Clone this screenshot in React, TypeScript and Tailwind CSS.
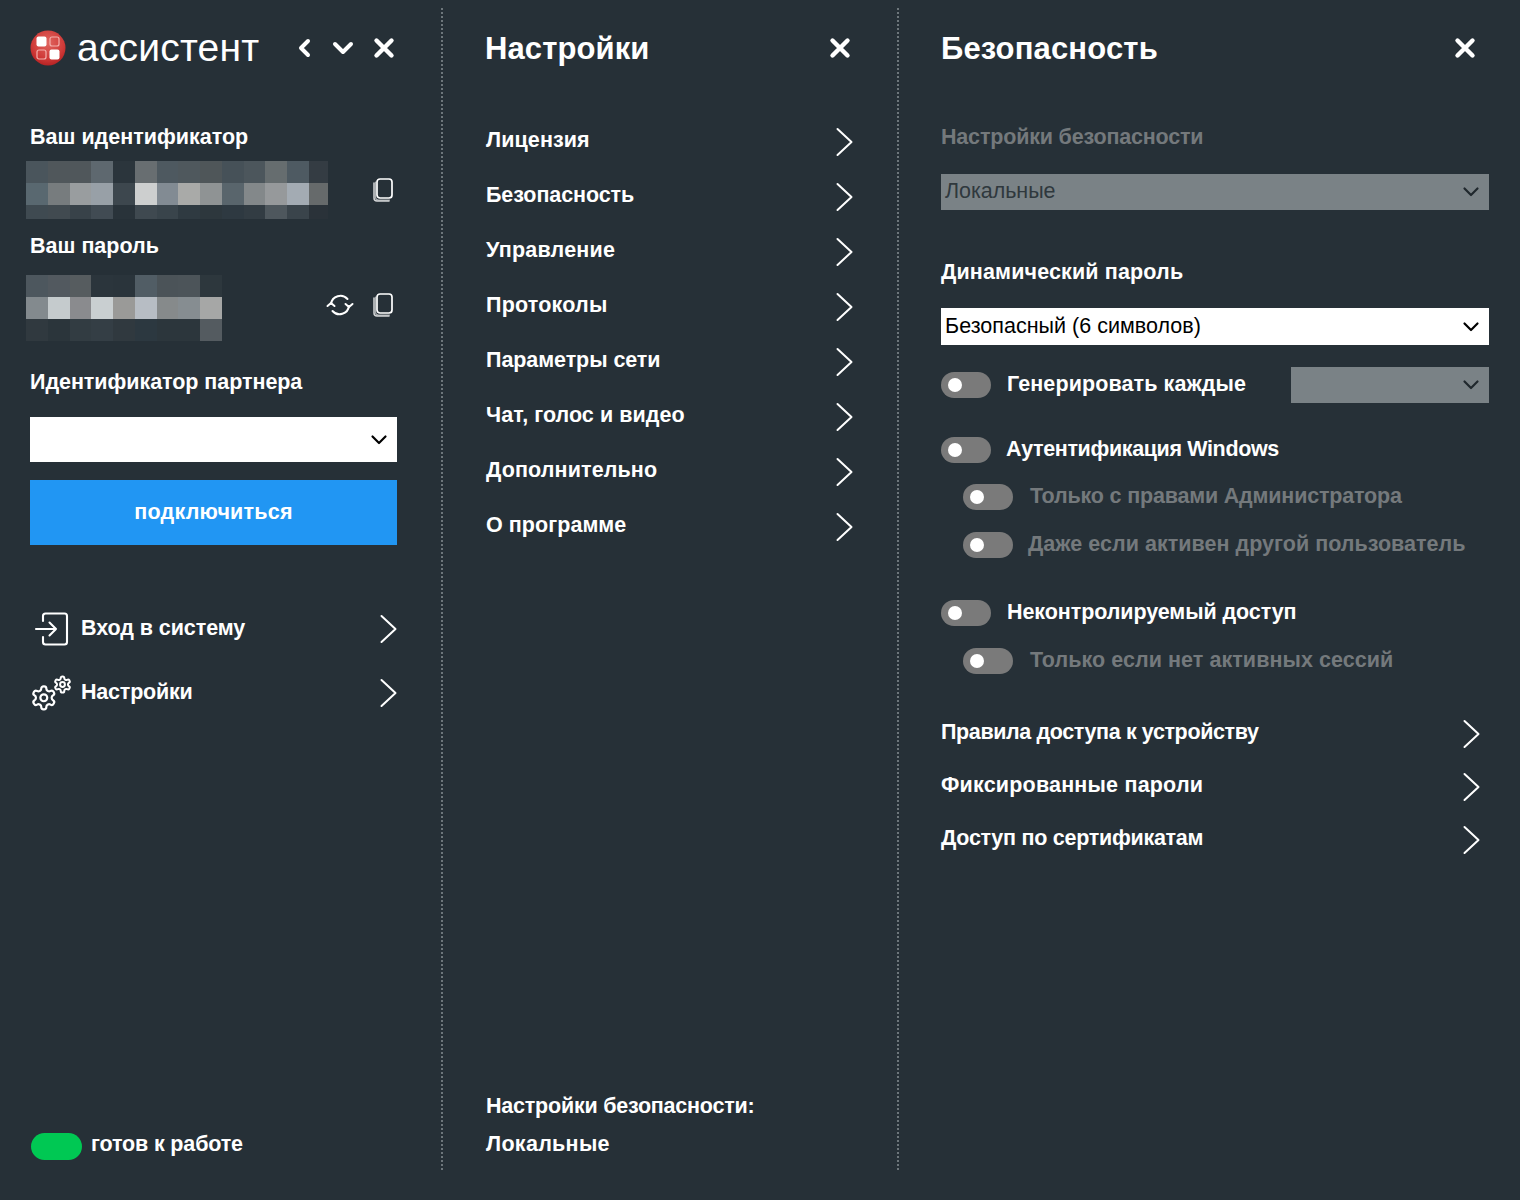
import React from "react";

const GEAR = "M12.22 2h-.44a2 2 0 0 0-2 2v.18a2 2 0 0 1-1 1.73l-.43.25a2 2 0 0 1-2 0l-.15-.08a2 2 0 0 0-2.73.73l-.22.38a2 2 0 0 0 .73 2.73l.15.1a2 2 0 0 1 1 1.72v.51a2 2 0 0 1-1 1.74l-.15.09a2 2 0 0 0-.73 2.73l.22.38a2 2 0 0 0 2.73.73l.15-.08a2 2 0 0 1 2 0l.43.25a2 2 0 0 1 1 1.73V20a2 2 0 0 0 2 2h.44a2 2 0 0 0 2-2v-.18a2 2 0 0 1 1-1.73l.43-.25a2 2 0 0 1 2 0l.15.08a2 2 0 0 0 2.73-.73l.22-.39a2 2 0 0 0-.73-2.73l-.15-.08a2 2 0 0 1-1-1.74v-.5a2 2 0 0 1 1-1.74l.15-.09a2 2 0 0 0 .73-2.73l-.22-.38a2 2 0 0 0-2.73-.73l-.15.08a2 2 0 0 1-2 0l-.43-.25a2 2 0 0 1-1-1.73V4a2 2 0 0 0-2-2z";

const ID_ROWS = [
  ["#4a555c","#50575b","#50575b","#5e686f","#2b353c","#686e71","#4e5960","#4f585d","#4f5659","#465158","#4c565c","#666d6f","#4e5a62","#343c43"],
  ["#596870","#777c7e","#999d9f","#98a0a7","#3d474e","#cdcfcf","#828b93","#a9aaa8","#8f9394","#59656c","#83888a","#96999b","#a3abb3","#666a6b"],
  ["#3f4a51","#414a50","#384249","#414b53","#29333a","#3f4950","#39444b","#2f3a41","#2d373d","#2e3941","#323c43","#4e575d","#3a444b","#2a3239"],
];
const PW_ROWS = [
  ["#4d575e","#52595f","#565c5f","#2b353c","#2a343b","#515d65","#4b5358","#4c5459","#2d373d"],
  ["#838a8e","#c5cbcd","#8a8b8e","#c9cfd1","#9a9a98","#b7bdc4","#868a8b","#868d91","#a6a7a6"],
  ["#30393f","#2b353b","#323c42","#343e45","#30393f","#2c3840","#2c363c","#2c363c","#545b60"],
];

function Mosaic({ rows, heights, lastCls }: { rows: string[][]; heights: string[]; lastCls: string }) {
  return (
    <div className="-ml-1 flex w-fit flex-col">
      {rows.map((r, i) => (
        <div key={i} className={`flex ${heights[i]}`}>
          {r.map((c, j) => (
            <div key={j} className={j === r.length - 1 ? lastCls : "w-[21.75px]"} style={{ backgroundColor: c }} />
          ))}
        </div>
      ))}
    </div>
  );
}

const Chevron = ({ className = "mt-[2px]" }: { className?: string }) => (
  <svg width="18" height="30" viewBox="0 0 18 30" fill="none" stroke="#fff" strokeWidth="2" strokeLinecap="round" strokeLinejoin="round" className={className}>
    <path d="M2.5 2l14 13-14 13" />
  </svg>
);

const Close = () => (
  <svg width="22" height="22" viewBox="0 0 22 22" fill="none" stroke="#fff" strokeWidth="4.4" strokeLinecap="round">
    <path d="M3.5 3.5l15 15M18.5 3.5l-15 15" />
  </svg>
);

const Copy = () => (
  <svg width="22" height="26" viewBox="0 0 22 26" fill="none" stroke="#fff" strokeLinecap="round">
    <rect x="5" y="2" width="15" height="19" rx="3" strokeWidth="1.7" />
    <path d="M2 6v15a3 3 0 0 0 3 3h12" strokeWidth="1.5" opacity=".8" />
    <path d="M3.5 5v15a3 3 0 0 0 3 3h11" strokeWidth="1.2" opacity=".6" />
  </svg>
);

const Refresh = () => (
  <svg width="28" height="26" viewBox="0 0 28 26" fill="none" stroke="#fff" strokeWidth="2" strokeLinecap="round" strokeLinejoin="round">
    <path d="M5 12A9.5 9.5 0 0 1 21.5 7" />
    <path d="M23 14A9.5 9.5 0 0 1 6.5 19" />
    <path d="M1.5 14l3.5-3 3.5 3M19.5 12l3.5 3 3.5-3" />
  </svg>
);

const Logo = () => (
  <svg width="36" height="36" viewBox="0 0 36 36">
    <defs>
      <radialGradient id="lg" cx="50%" cy="35%" r="70%">
        <stop offset="0%" stopColor="#e0655f" />
        <stop offset="65%" stopColor="#cf3a38" />
        <stop offset="100%" stopColor="#b01d1f" />
      </radialGradient>
    </defs>
    <circle cx="18" cy="18" r="17.5" fill="url(#lg)" />
    <rect x="6.5" y="6.5" width="10" height="10" rx="2" fill="#fff" />
    <rect x="20" y="7" width="9" height="9" rx="2" fill="none" stroke="#f3b0ac" strokeWidth="1.2" />
    <rect x="7" y="20" width="9" height="9" rx="2" fill="none" stroke="#f3b0ac" strokeWidth="1.2" />
    <rect x="19.5" y="19.5" width="10" height="10" rx="2" fill="#fff" />
  </svg>
);

const Login = () => (
  <svg width="36" height="36" viewBox="0 0 36 36" fill="none" stroke="#fff" strokeWidth="2.1" strokeLinecap="round" strokeLinejoin="round">
    <path d="M9 10V5a2.5 2.5 0 0 1 2.5-2.5h19A2.5 2.5 0 0 1 33 5v26a2.5 2.5 0 0 1-2.5 2.5h-19A2.5 2.5 0 0 1 9 31v-5" />
    <path d="M2 18h20M15.5 11.5L22 18l-6.5 6.5" />
  </svg>
);

const Gears = () => (
  <svg width="40" height="38" viewBox="0 0 40 38" fill="none" stroke="#fff" strokeLinecap="round" strokeLinejoin="round" className="overflow-visible">
    <g transform="translate(-2 10) scale(1.15)" strokeWidth="1.9">
      <path d={GEAR} />
      <circle cx="12" cy="12" r="3" />
    </g>
    <g transform="translate(20.9 0.9) scale(0.8)" strokeWidth="2.5">
      <path d={GEAR} />
      <circle cx="12" cy="12" r="3" />
    </g>
  </svg>
);

const SmallChev = ({ color = "#000" }: { color?: string }) => (
  <svg width="18" height="12" viewBox="0 0 18 12" fill="none" stroke={color} strokeWidth="2.2" strokeLinecap="round" strokeLinejoin="round">
    <path d="M2.5 2.5L9 9l6.5-6.5" />
  </svg>
);

const Toggle = () => (
  <div className="flex h-[26px] w-[50px] shrink-0 items-center rounded-full bg-[#7a7a7a] pl-[7px]">
    <div className="h-[14px] w-[14px] rounded-full bg-white" />
  </div>
);

const MenuRow = ({ label, cls }: { label: string; cls: string }) => (
  <div className="flex h-[55px] items-center justify-between">
    <span className={cls}>{label}</span>
    <Chevron />
  </div>
);

const LinkRow = ({ label, cls, textCls }: { label: string; cls: string; textCls: string }) => (
  <div className={`flex items-center justify-between pr-[9px] ${cls}`}>
    <span className={textCls}>{label}</span>
    <Chevron className="mt-[3px]" />
  </div>
);

const MENU: [string, string][] = [
  ["Лицензия", "tracking-[0.1px]"],
  ["Безопасность", "tracking-[-0.08px]"],
  ["Управление", "tracking-[0.2px]"],
  ["Протоколы", "tracking-[0.2px]"],
  ["Параметры сети", "tracking-[-0.07px]"],
  ["Чат, голос и видео", "tracking-[0.05px]"],
  ["Дополнительно", "tracking-[0.12px]"],
  ["О программе", "tracking-[0.05px]"],
];

export default function App() {
  return (
    <div
      className="flex h-[1200px] w-[1520px] items-start overflow-hidden bg-[#263037] pt-2 text-[21.5px] font-bold leading-none text-white"
      style={{ fontFamily: '"Liberation Sans", Arial, sans-serif' }}
    >
      {/* assistant column */}
      <div className="flex h-[1162px] w-[443px] shrink-0 flex-col border-r-2 border-dotted border-[#6d767b] pl-[30px] pr-[44px]">
        <div className="flex h-[80px] shrink-0 items-center justify-between">
          <div className="flex items-center gap-[11px]">
            <Logo />
            <span className="-mt-[2px] text-[39px] font-normal tracking-[0.2px]">ассистент</span>
          </div>
          <div className="mr-[2px] flex items-center">
            <svg width="22" height="22" viewBox="0 0 22 22" fill="none" stroke="#fff" strokeWidth="4" strokeLinecap="round" strokeLinejoin="round" className="mr-[16px]"><path d="M14 4l-7 7 7 7" /></svg>
            <svg width="22" height="22" viewBox="0 0 22 22" fill="none" stroke="#fff" strokeWidth="4" strokeLinecap="round" strokeLinejoin="round" className="mr-[19px]"><path d="M3 7l8 8 8-8" /></svg>
            <Close />
          </div>
        </div>
        <div className="mt-[35px] flex h-[30px] shrink-0 items-center">Ваш идентификатор</div>
        <div className="mt-[8px] flex h-[58px] shrink-0 items-center justify-between">
          <Mosaic rows={ID_ROWS} heights={["h-[21.7px]", "h-[22px]", "h-[14px]"]} lastCls="w-[19px]" />
          <div className="mr-[3px]"><Copy /></div>
        </div>
        <div className="mt-[13px] flex h-[30px] shrink-0 items-center">Ваш пароль</div>
        <div className="mt-[13px] flex h-[66px] shrink-0 items-center justify-between">
          <Mosaic rows={PW_ROWS} heights={["h-[22px]", "h-[22px]", "h-[22px]"]} lastCls="w-[21.75px]" />
          <div className="mb-[7px] mr-[3px] flex items-center gap-[18px]">
            <Refresh />
            <Copy />
          </div>
        </div>
        <div className="mt-[27px] flex h-[30px] shrink-0 items-center tracking-[-0.05px]">Идентификатор партнера</div>
        <div className="mt-[19px] flex h-[45px] shrink-0 items-center justify-end bg-white pr-[9px]">
          <SmallChev />
        </div>
        <div className="mt-[18px] flex h-[65px] shrink-0 items-center justify-center bg-[#2196f3] tracking-[0.25px]">подключиться</div>
        <div className="mt-[52px] flex h-[64px] shrink-0 items-center">
          <div className="w-[51px]"><div className="ml-[4px]"><Login /></div></div>
          <span className="flex-1 tracking-[-0.07px]">Вход в систему</span>
          <Chevron className="mt-0" />
        </div>
        <div className="flex h-[64px] shrink-0 items-center">
          <div className="w-[51px]"><div className="ml-[2px]"><Gears /></div></div>
          <span className="flex-1 tracking-[-0.2px]">Настройки</span>
          <Chevron className="mt-0" />
        </div>
        <div className="mb-[10px] mt-auto flex h-[30px] shrink-0 items-center gap-[10px] pl-px">
          <div className="mt-[2px] h-[27px] w-[51px] rounded-full bg-[#00c853]" />
          <span className="-ml-px tracking-[-0.15px]">готов к работе</span>
        </div>
      </div>

      {/* settings column */}
      <div className="flex h-[1162px] w-[456px] shrink-0 flex-col border-r-2 border-dotted border-[#6d767b] pl-[43px] pr-[44px]">
        <div className="flex h-[80px] shrink-0 items-center justify-between">
          <span className="-ml-px text-[31px] tracking-[0.1px]">Настройки</span>
          <div className="mr-[2px]"><Close /></div>
        </div>
        <div className="mt-[25px] flex flex-col">
          {MENU.map(([l, c]) => (
            <MenuRow key={l} label={l} cls={c} />
          ))}
        </div>
        <div className="mb-[7px] mt-auto flex flex-col leading-[38px]">
          <span className="tracking-[-0.22px]">Настройки безопасности:</span>
          <span className="tracking-[0.3px]">Локальные</span>
        </div>
      </div>

      {/* security column */}
      <div className="flex h-[1162px] flex-1 flex-col pl-[42px] pr-[31px]">
        <div className="flex h-[80px] shrink-0 items-center justify-between">
          <span className="text-[31px] tracking-[0.15px]">Безопасность</span>
          <div className="mr-[13px]"><Close /></div>
        </div>
        <div className="mt-[35px] flex h-[30px] shrink-0 items-center tracking-[-0.18px] text-[#74797c]">Настройки безопасности</div>
        <div className="mt-[21px] flex h-[36px] shrink-0 items-center justify-between bg-[#7a8286] pl-[4px] pr-[9px] font-normal text-[#2f383d]">
          <span className="tracking-[-0.05px]">Локальные</span>
          <SmallChev color="#20282d" />
        </div>
        <div className="mt-[48px] flex h-[30px] shrink-0 items-center tracking-[0.15px]">Динамический пароль</div>
        <div className="mt-[20px] flex h-[37px] shrink-0 items-center justify-between bg-white pl-[4px] pr-[9px] font-normal text-black">
          <span className="tracking-[0.02px]">Безопасный (6 символов)</span>
          <SmallChev />
        </div>
        <div className="mt-[22px] flex h-[36px] shrink-0 items-center">
          <Toggle />
          <span className="ml-[16px] flex-1 tracking-[0.1px]">Генерировать каждые</span>
          <div className="flex h-[36px] w-[198px] items-center justify-end bg-[#7a8286] pr-[9px]">
            <SmallChev color="#20282d" />
          </div>
        </div>
        <div className="mt-[29px] flex h-[36px] shrink-0 items-center">
          <Toggle />
          <span className="ml-[15px] tracking-[-0.36px]">Аутентификация Windows</span>
        </div>
        <div className="mt-[11px] flex h-[36px] shrink-0 items-center pl-[22px] text-[#74797c]">
          <Toggle />
          <span className="ml-[17px] tracking-[-0.18px]">Только с правами Администратора</span>
        </div>
        <div className="mt-[12px] flex h-[36px] shrink-0 items-center pl-[22px] text-[#74797c]">
          <Toggle />
          <span className="ml-[15px] tracking-[0.03px]">Даже если активен другой пользователь</span>
        </div>
        <div className="mt-[32px] flex h-[36px] shrink-0 items-center">
          <Toggle />
          <span className="ml-[16px] tracking-[-0.08px]">Неконтролируемый доступ</span>
        </div>
        <div className="mt-[12px] flex h-[36px] shrink-0 items-center pl-[22px] text-[#74797c]">
          <Toggle />
          <span className="ml-[17px] tracking-[0.06px]">Только если нет активных сессий</span>
        </div>
        <LinkRow label="Правила доступа к устройству" cls="mt-[27px] h-[53px] shrink-0" textCls="tracking-[-0.38px]" />
        <LinkRow label="Фиксированные пароли" cls="h-[53px] shrink-0" textCls="tracking-[0.2px]" />
        <LinkRow label="Доступ по сертификатам" cls="h-[53px] shrink-0" textCls="tracking-[-0.27px]" />
      </div>
    </div>
  );
}
